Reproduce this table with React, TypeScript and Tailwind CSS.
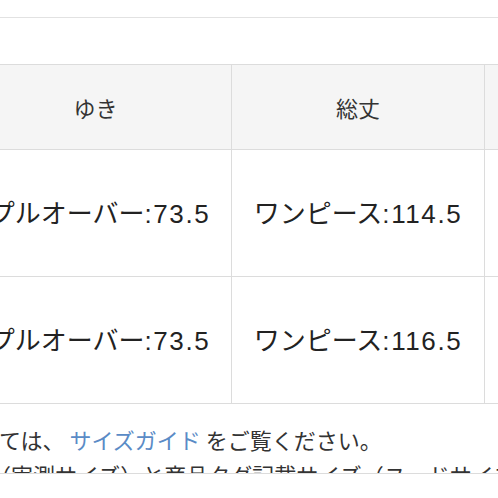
import React from 'react';

const jp = { fontFamily: '"Noto Sans CJK JP", sans-serif' };
const num = { fontFamily: '"Liberation Sans", Arial, sans-serif' };

const rows = [
  [['プルオーバー', ':73.5'], ['ワンピース', ':114.5']],
  [['プルオーバー', ':73.5'], ['ワンピース', ':116.5']],
];

const Value: React.FC<{ label: string; n: string }> = ({ label, n }) => (
  <span className="whitespace-nowrap text-[26px] text-[#222]">
    {label}
    <span className="tracking-[1.6px]" style={num}>{n}</span>
  </span>
);

const App: React.FC = () => {
  return (
    <div className="w-[498px] h-[498px] overflow-hidden bg-white text-[#333]" style={jp}>
      {/* top rule */}
      <div className="h-[18px] border-b border-[#e2e2e2]" />
      <div className="h-[46px]" />

      {/* size table */}
      <div className="-ml-[40px] w-[740px] border-t border-[#dcdcdc]">
        <div className="flex h-[85px] border-b border-[#dcdcdc] bg-[#f5f5f5]">
          <div className="w-[272px] border-r border-[#dcdcdc] flex items-center justify-center text-[22px]">ゆき</div>
          <div className="w-[253px] border-r border-[#dcdcdc] flex items-center justify-center text-[22px]">総丈</div>
          <div className="flex-1" />
        </div>
        {rows.map((r, i) => (
          <div key={i} className="flex h-[127px] border-b border-[#dcdcdc]">
            <div className="w-[272px] border-r border-[#dcdcdc] flex items-center justify-center pl-[8px]">
              <Value label={r[0][0]} n={r[0][1]} />
            </div>
            <div className="w-[253px] border-r border-[#dcdcdc] flex items-center justify-center">
              <Value label={r[1][0]} n={r[1][1]} />
            </div>
            <div className="flex-1" />
          </div>
        ))}
      </div>

      {/* notes */}
      <div className="h-[70px] pt-[18px] overflow-hidden border-b border-[#dcdcdc] text-[22px] text-[#333] whitespace-nowrap">
        <p className="leading-[35px] -ml-[1px]">
          ては、 <span className="text-[#5a8bc6]">サイズガイド</span> をご覧ください。
        </p>
        <p className="leading-[35px] -ml-[11px]">（実測サイズ）と商品タグ記載サイズ（ヌードサイズ）</p>
      </div>
    </div>
  );
};

export default App;
